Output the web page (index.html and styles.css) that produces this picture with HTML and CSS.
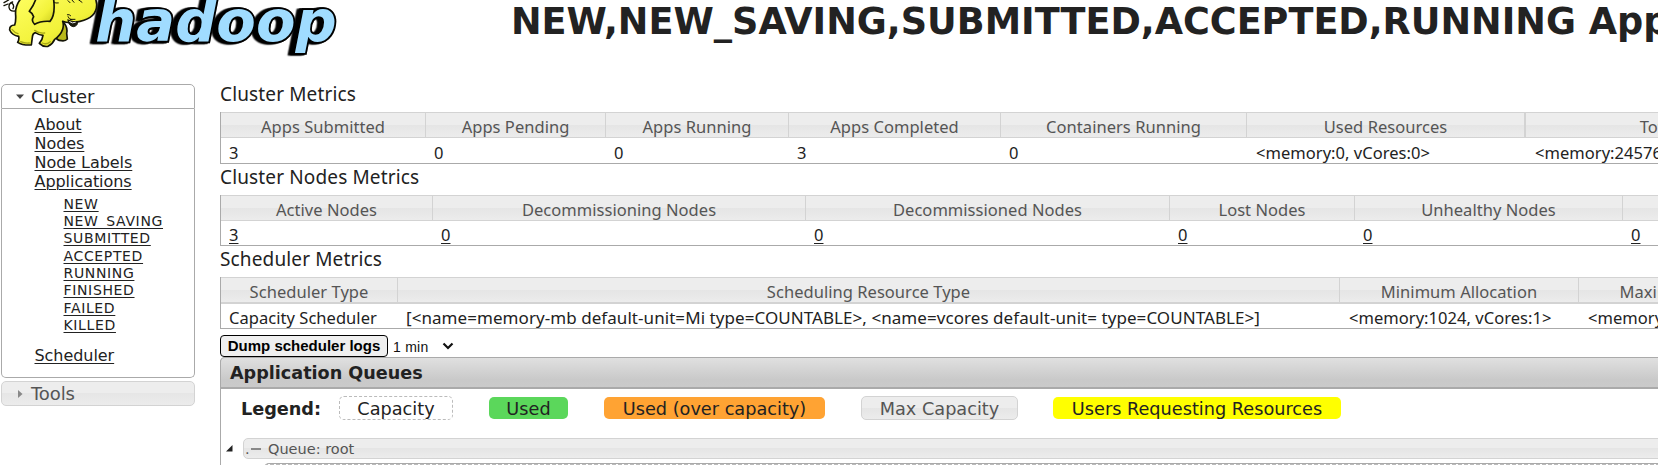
FILE: index.html
```html
<!DOCTYPE html>
<html lang="en">
<head>
<meta charset="utf-8">
<title>NEW,NEW_SAVING,SUBMITTED,ACCEPTED,RUNNING Applications</title>
<link rel="stylesheet" href="styles.css">
</head>
<body>
<header class="top">
  <svg class="logo" viewBox="0 0 1080 180" role="img" aria-label="hadoop">
    <defs>
      <linearGradient id="skin" x1="0" y1="0" x2="1" y2="1"><stop offset="0" stop-color="#ffff62"/><stop offset=".6" stop-color="#f2f23a"/><stop offset="1" stop-color="#c9c91c"/></linearGradient>
    </defs>
    <text class="word" x="286" y="124" textLength="724" lengthAdjust="spacingAndGlyphs">hadoop</text>
    <g fill="url(#skin)" stroke="#151508" stroke-width="5" stroke-linejoin="round" stroke-linecap="round">
      <path d="M46 33Q30 36 27 22Q26 10 38 6M12 8l14-8M12 17l12-5M36 10q8 6 3 16" fill="none" stroke-width="4"/>
      <path d="M166 108Q170 122 184 122Q196 124 202 117L200 100Q204 84 192 68Z" fill="#b9b91c"/>
      <path d="M66-8Q44 16 47 46Q48 64 44 75Q28 76 29 90Q36 106 56 109Q58 120 53 127Q66 136 94 135L97 112Q98 100 106 98Q118 106 129 106Q128 118 118 130Q130 142 144 139Q158 132 164 118Q182 106 188 88Q192 76 188 64Q206 72 240 64Q292 52 290 12L286-10Z"/>
      <path d="M204 60Q206 78 220 80Q234 78 233 64Q218 68 204 60Z" fill="#1c1c10" stroke-width="3"/>
      <path d="M209 65q8 7 17 2" fill="none" stroke="#eee" stroke-width="3"/>
      <path d="M109-8Q104 12 88 34Q98 40 101 50Q92 62 104 73Q122 62 150 64Q168 44 160-8" stroke-width="5"/>
      <path d="M161 6q6 5 14 3M202 44q6-2 10 3M204 50q2 8 12 10M234-2l12 9M214-2l8 9M204 2l6 6M211 58h14" fill="none" stroke-width="3"/>
      <path d="M62 125q14 6 26 4M127 129q12 6 24-4M36 88q8 10 18 13M104 91q14 10 30 8" fill="none" stroke="#a9a916" stroke-width="4"/>
    </g>
  </svg>
  <h1 class="title">NEW,NEW_SAVING,SUBMITTED,ACCEPTED,RUNNING Applications</h1>
</header>
<div class="layout">
  <nav class="side">
    <h3 class="acc acc-open"><svg class="tri" viewBox="0 0 8 8"><path d="M0 1.500h8l-4 4.500z" fill="#454545"/></svg>Cluster</h3>
    <div class="acc-body">
      <ul class="menu">
        <li><a>About</a></li><li><a>Nodes</a></li><li><a>Node Labels</a></li><li><a>Applications</a>
          <ul class="submenu">
            <li><a>NEW</a></li><li><a>NEW_SAVING</a></li><li><a>SUBMITTED</a></li><li><a>ACCEPTED</a></li>
            <li><a>RUNNING</a></li><li><a>FINISHED</a></li><li><a>FAILED</a></li><li><a>KILLED</a></li>
          </ul>
        </li>
        <li><a>Scheduler</a></li>
      </ul>
    </div>
    <h3 class="acc acc-closed"><svg class="tri" viewBox="0 0 8 8"><path d="M2 0v8l4.500-4z" fill="#888"/></svg>Tools</h3>
  </nav>
  <main class="main">
    <h3 class="heading">Cluster Metrics</h3>
    <div class="grid cluster">
      <div class="th">Apps Submitted</div><div class="th">Apps Pending</div><div class="th">Apps Running</div><div class="th">Apps Completed</div><div class="th">Containers Running</div><div class="th wide-line">Used Resources</div><div class="th">Total Resources</div>
      <div class="td">3</div><div class="td">0</div><div class="td">0</div><div class="td">3</div><div class="td">0</div><div class="td">&lt;memory:0, vCores:0&gt;</div><div class="td">&lt;memory:24576, vCores:24&gt;</div>
    </div>
    <h3 class="heading">Cluster Nodes Metrics</h3>
    <div class="grid nodes">
      <div class="th">Active Nodes</div><div class="th">Decommissioning Nodes</div><div class="th">Decommissioned Nodes</div><div class="th">Lost Nodes</div><div class="th">Unhealthy Nodes</div><div class="th">Rebooted Nodes</div>
      <div class="td"><a>3</a></div><div class="td"><a>0</a></div><div class="td"><a>0</a></div><div class="td"><a>0</a></div><div class="td"><a>0</a></div><div class="td"><a>0</a></div>
    </div>
    <h3 class="heading">Scheduler Metrics</h3>
    <div class="grid sched">
      <div class="th">Scheduler Type</div><div class="th">Scheduling Resource Type</div><div class="th">Minimum Allocation</div><div class="th">Maximum Allocation</div>
      <div class="td">Capacity Scheduler</div><div class="td long">[&lt;name=memory-mb default-unit=Mi type=COUNTABLE&gt;, &lt;name=vcores default-unit= type=COUNTABLE&gt;]</div><div class="td">&lt;memory:1024, vCores:1&gt;</div><div class="td">&lt;memory:8192, vCores:4&gt;</div>
    </div>
    <div class="dump">
      <button class="dump-btn">Dump scheduler logs</button>
      <span class="period">1 min</span>
      <svg class="chev" viewBox="0 0 12 8"><path d="M1.500 1.500L6 6l4.500-4.500" fill="none" stroke="#111" stroke-width="2.200"/></svg>
    </div>
    <section class="queues">
      <h3 class="queues-head">Application Queues</h3>
      <div class="legend">
        <b class="legend-label">Legend:</b>
        <span class="chip capacity">Capacity</span><span class="chip used">Used</span><span class="chip over">Used (over capacity)</span><span class="chip max">Max Capacity</span><span class="chip users">Users Requesting Resources</span>
      </div>
      <div class="node">
        <svg class="node-tri" viewBox="0 0 7 7"><path d="M6.500 0v6.500H0z" fill="#222"/></svg>
        <div class="queue"><span class="dot">.</span><span class="dash"></span>Queue: root</div>
      </div>
      <div class="child"></div>
    </section>
  </main>
</div>
</body>
</html>
```
FILE: styles.css
```css
* { box-sizing: border-box; }
html, body { height: 465px; overflow: hidden; }
body { margin: 0; background: #fff; color: #222; font-family: "DejaVu Sans", Verdana, sans-serif; }
h1, h3 { margin: 0; font-weight: normal; }
ul { margin: 0; padding: 0; list-style: none; }
a { text-decoration: underline; text-decoration-thickness: 1px; text-underline-offset: 2px; }

.top { display: flex; height: 80px; width: 1900px; }
.logo { width: 360px; height: 60px; flex: none; }
.word {
  font: italic bold 172px "DejaVu Sans", sans-serif;
  fill: #a0dcff; stroke: #000; stroke-width: 11px; stroke-linejoin: miter; stroke-miterlimit: 3; paint-order: stroke;
  filter: drop-shadow(-8px 1px 0 #000) drop-shadow(-7px 1px 0 #000) drop-shadow(0 0 2px #888);
}
.title { margin-left: 151px; font-size: 36.6px; font-weight: bold; line-height: 43px; white-space: nowrap; }

.layout { display: flex; width: 1900px; }
.side { width: 194px; margin: 4px 25px 0 1px; flex: none; }
.acc { display: flex; align-items: center; height: 25px; padding-left: 14px; font-size: 18px; letter-spacing: -.1px; line-height: 22px; }
.tri { width: 8px; height: 8px; margin-right: 7px; }
.acc-open { border: 1px solid #aaa; border-radius: 5px 5px 0 0; color: #212121; }
.acc-body { height: 269px; padding: 6px 0 0 32.5px; border: 1px solid #aaa; border-top: 0; border-radius: 0 0 5px 5px; }
.acc-closed { margin-top: 3px; border: 1px solid #d3d3d3; border-radius: 5px; color: #555; background: linear-gradient(#ededed 50%, #e6e6e6 50%, #ececec); }
.menu { font-size: 16px; line-height: 19px; letter-spacing: -.05px; }
.submenu { margin: 4.8px 0 11.9px 29px; font-size: 14px; line-height: 17.33px; letter-spacing: .65px; }

.main { width: 1680px; flex: none; padding-top: 1px; }
.heading { height: 31px; font: 19px/26px "Noto Sans", sans-serif; letter-spacing: .14px; }
.grid { display: grid; border: 1px solid #aaa; border-top: 0; border-right: 0; font: 16.5px/23px "Noto Sans", sans-serif; letter-spacing: .04px; }
.th { height: 26px; padding-top: 2px; border: solid #d3d3d3; border-width: 1px 1px 1px 0; color: #555; text-align: center; background: linear-gradient(#ededed 50%, #e5e5e5 50%, #ececec); white-space: nowrap; }
.td { height: 25px; padding: 3px 0 0 8px; white-space: nowrap; }
.wide-line { border-right-width: 2px; }
.cluster { grid-template-columns: 205px 180px 183px 212px 246px 279px 350px; }
.nodes { grid-template-columns: 212px 373px 364px 185px 268px 277px; }
.sched { grid-template-columns: 177px 942px 239px 242px; }
.cluster .td:nth-last-child(-n+2), .sched .td:nth-last-child(-n+2) { padding-left: 9px; }
.nodes .td, .sched .td { height: 24px; padding-top: 2px; }
.sched .th { height: 27px; border-bottom-width: 2px; }
.long { font-size: 17px; letter-spacing: .06px; }

.dump { display: flex; align-items: center; height: 28px; padding-top: 6px; font-family: "Liberation Sans", Arial, sans-serif; }
.dump-btn { width: 168px; height: 22px; padding: 0; border: 1px solid #000; border-radius: 4px; background: #efefef; color: #000; font: bold 15px/20px "Liberation Sans", Arial, sans-serif; white-space: nowrap; }
.period { margin-left: 5px; padding-top: 1px; font-size: 14px; letter-spacing: .25px; color: #111; }
.chev { width: 12px; height: 8px; margin-left: 14px; }

.queues { border-left: 1px solid #aaa; border-radius: 5px 0 0 0; }
.queues-head { height: 32px; margin-left: -1px; padding-left: 9px; border: 1px solid #aaa; border-bottom-width: 2px; border-radius: 5px 0 0 0; background: linear-gradient(#e0e0e0, #c9c9c9 75%, #cacaca); font-size: 17.6px; font-weight: bold; line-height: 31px; }
.legend { display: flex; align-items: center; height: 38px; padding-left: 20px; font-size: 17.7px; line-height: 24px; }
.legend-label { width: 98px; padding-top: 2px; font-size: 17.7px; letter-spacing: -.05px; }
.chip { height: 22px; margin-right: 36px; border-radius: 5px; text-align: center; white-space: nowrap; }
.capacity { width: 114px; height: 24px; border: 1px dashed #bbb; }
.used { width: 79px; background: #5bd75b; }
.over { width: 221px; background: #ffa333; }
.max { width: 157px; height: 24px; margin-right: 35px; border: 1px solid #d3d3d3; color: #555; background: linear-gradient(#ededed 50%, #e5e5e5 50%, #ececec); }
.users { width: 288px; background: #ff0; }
.node { display: flex; align-items: center; margin-top: 11px; padding-left: 5px; }
.node-tri { width: 7px; height: 7px; margin-right: 10px; }
.queue { display: flex; flex: 1; align-items: center; height: 21px; padding-left: 1px; border: 1px solid #d3d3d3; border-radius: 5px; color: #555; background: linear-gradient(#ededed 50%, #e5e5e5 50%, #ececec); font-size: 14.5px; }
.dot { width: 6px; }
.dash { width: 10px; height: 2px; margin-right: 7px; background: #888; }
.child { height: 20px; margin: 4px 0 0 43px; border-top: 1px solid #aaa; border-radius: 5px; background: repeating-linear-gradient(90deg, #bbb 0 4px, #fff 4px 6px); }
```
